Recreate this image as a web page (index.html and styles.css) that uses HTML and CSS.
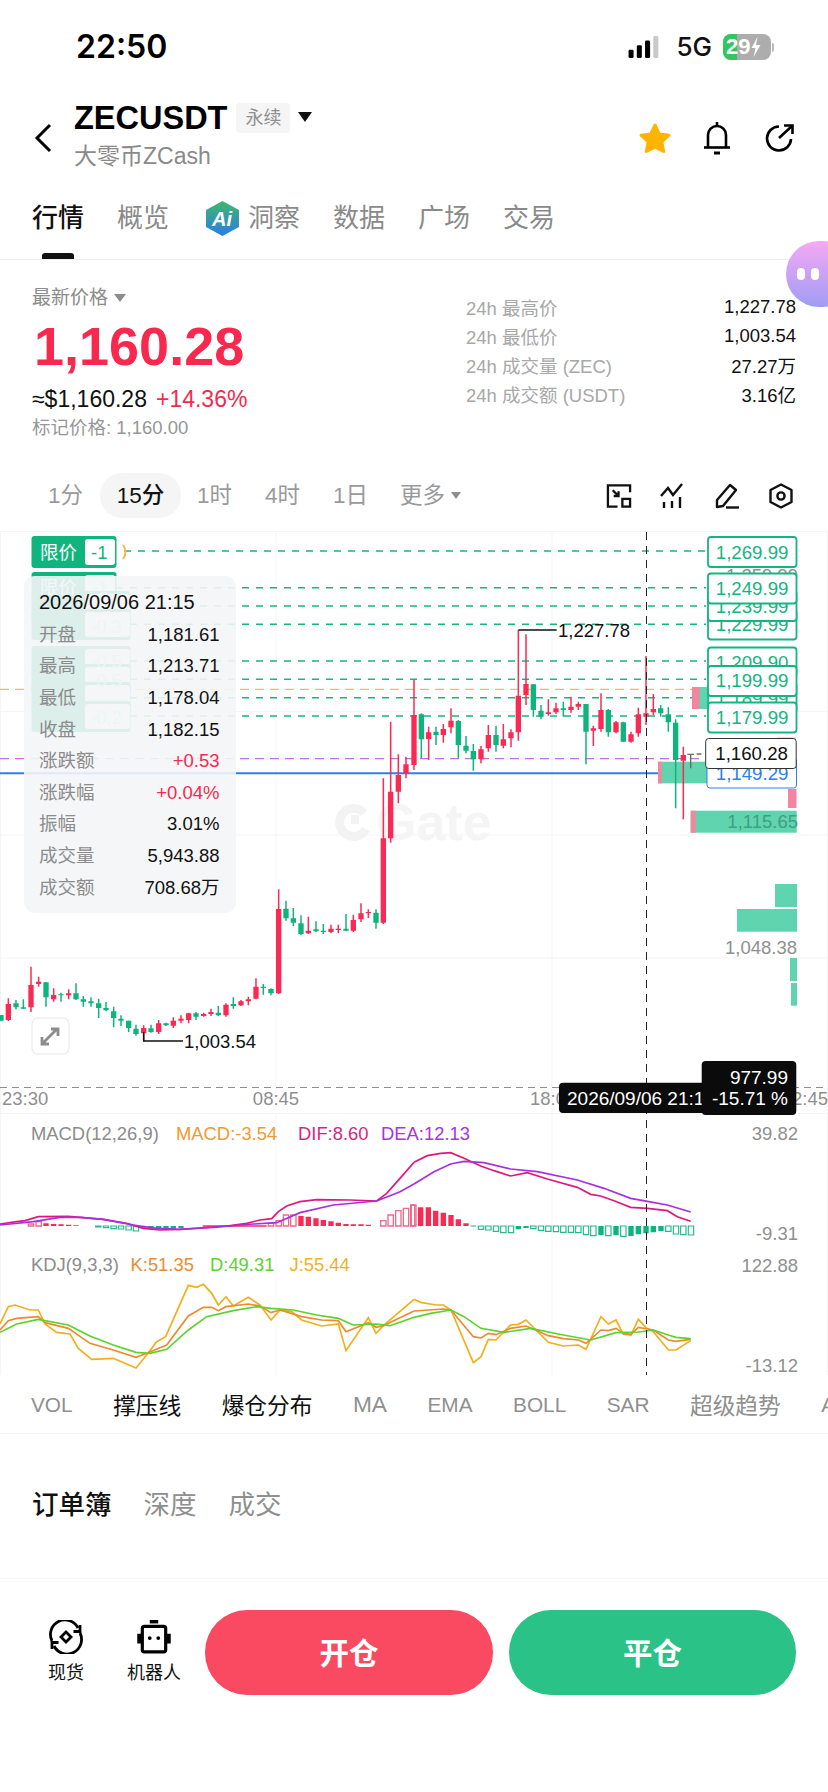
FILE: index.html
```html
<!DOCTYPE html>
<html lang="zh">
<head>
<meta charset="utf-8">
<title>ZECUSDT</title>
<link rel="stylesheet" href="styles.css">
</head>
<body>
<div class="page">
  <header class="status">
    <div class="clock">22:50</div>
    <div class="status-right">
      <svg class="signal" viewBox="0 0 37 24"><rect x="0" y="15" width="5.500" height="9" rx="1.500" fill="#000"/><rect x="9" y="10" width="5.500" height="14" rx="1.500" fill="#000"/><rect x="18" y="5" width="5.500" height="19" rx="1.500" fill="#000"/><rect x="27" y="0" width="5.500" height="24" rx="1.500" fill="#c9c9c9"/></svg>
      <span class="net">5G</span>
      <div class="battery"><span class="battery-fill"></span><span class="battery-num">29</span><svg class="bolt" viewBox="0 0 10 20"><path d="M7 0 1 11h4l-2 9 7-12H5.500z" fill="#fff"/></svg></div>
      <span class="battery-tip"></span>
    </div>
  </header>

  <nav class="nav">
    <svg class="back" viewBox="0 0 18 30"><path d="M16 2 3 15l13 13" fill="none" stroke="#000" stroke-width="3"/></svg>
    <div class="title-block">
      <div class="title-row"><h1 class="symbol">ZECUSDT</h1><span class="chip">永续</span><i class="caret"></i></div>
      <div class="subtitle">大零币ZCash</div>
    </div>
    <div class="nav-actions">
      <svg class="star" viewBox="0 0 34 32"><path d="M17 3l4.200 9 9.800 1.200-7.200 6.700 1.900 9.600L17 25.100 8.300 29.500l1.900-9.600L3 13.200l9.800-1.200z" fill="#ffb400" stroke="#ffb400" stroke-width="3" stroke-linejoin="round"/></svg>
      <svg class="bell" viewBox="0 0 32 34" fill="none" stroke="#000" stroke-width="2.600"><path d="M16 1v3"/><path d="M7 26V14a9 9 0 0 1 18 0v12"/><path d="M3 26.500h26"/><path d="M13 32h6" stroke-width="3"/></svg>
      <svg class="share" viewBox="0 0 30 30" fill="none" stroke="#000" stroke-width="2.600"><path d="M14 3.500A12 12 0 1 0 26 16"/><path d="M14 15 27 3"/><path d="M19 2.500h8.500V11"/></svg>
    </div>
  </nav>

  <div class="tabs">
    <span class="tab tab-on">行情</span>
    <span class="tab">概览</span>
    <span class="tab tab-ai">
      <svg class="ai" viewBox="0 0 33 35"><defs><linearGradient id="aig" x1="0" y1="0" x2="0" y2="1"><stop offset="0" stop-color="#3fb86a"/><stop offset="1" stop-color="#2a7de6"/></linearGradient></defs><path d="M16.500 0 33 9v17l-16.500 9L0 26V9z" fill="url(#aig)"/><text class="ai-text" x="16" y="25">Ai</text></svg>
      洞察
    </span>
    <span class="tab">数据</span>
    <span class="tab">广场</span>
    <span class="tab">交易</span>
    <i class="tab-bar"></i>
    <div class="bubble"><i></i><i></i></div>
  </div>

  <section class="info">
    <div class="info-left">
      <div class="latest">最新价格<i class="tri"></i></div>
      <div class="price">1,160.28</div>
      <div class="sub-price">≈$1,160.28<span class="pct">+14.36%</span></div>
      <div class="mark">标记价格: 1,160.00</div>
    </div>
    <dl class="stats">
      <div class="stat"><dt>24h 最高价</dt><dd>1,227.78</dd></div>
      <div class="stat"><dt>24h 最低价</dt><dd>1,003.54</dd></div>
      <div class="stat"><dt>24h 成交量 (ZEC)</dt><dd>27.27万</dd></div>
      <div class="stat"><dt>24h 成交额 (USDT)</dt><dd>3.16亿</dd></div>
    </dl>
  </section>

  <div class="frames">
    <span class="frame frame-first">1分</span>
    <span class="frame frame-on">15分</span>
    <span class="frame">1时</span>
    <span class="frame">4时</span>
    <span class="frame">1日</span>
    <span class="frame frame-more">更多<i class="tri tri-sm"></i></span>
    <div class="frame-tools">
      <svg viewBox="0 0 27 26" fill="none" stroke="#111" stroke-width="2.400"><path d="M25 9V2H2v22h10"/><path d="M7 7l6 6M13 8v5H8"/><rect x="17" y="16" width="8" height="8"/></svg>
      <svg viewBox="0 0 26 26" fill="none" stroke="#111" stroke-width="2.400"><path d="M1 13 8 5l5 7 9-11"/><path d="M4 19v6M12 18v7M20 14v11"/></svg>
      <svg viewBox="0 0 26 26" fill="none" stroke="#111" stroke-width="2.400" stroke-linejoin="round"><path d="M3 24V17L16 2l6 5L9 23z"/><path d="M12 24.500h13"/></svg>
      <svg viewBox="0 0 24 26" fill="none" stroke="#111" stroke-width="2.400" stroke-linejoin="round"><path d="M12 1.500 22.500 7v12L12 24.500 1.500 19V7z"/><circle cx="12" cy="13" r="3.600"/></svg>
    </div>
  </div>

  <svg class="chart" viewBox="0 531 828 844">
    <!-- grid -->
    <path class="grid" d="M0.500 531V1375M276 531V1110M552 531V1375M827.500 531V1375M0 531.500H828M0 711.500H828M0 835H828M0 958H828M0 1113.500H828M276 1114V1375"/>
    <!-- watermark -->
    <path class="wm-ring" d="M364 813A14 14 0 1 0 366 829"/>
    <rect class="wm-dot" x="351" y="815" width="8" height="9"/>
    <text class="wm" x="376" y="840">Gate</text>
    <!-- order lines -->
    <path class="dash-g" d="M124 551H706M116 587.700H706M116 606H706M116 624.300H706M116 661H706M116 679.300H706M116 697.700H706M116 716H706"/>
    <path class="dash-o" d="M0 689.300H692"/>
    <path class="dash-p" d="M0 758.700H706"/>
    <path class="line-b" d="M0 773.300H706"/>
    <!-- depth bars -->
    <rect class="bar-g" x="692" y="687" width="15" height="22"/><rect class="bar-r" x="692" y="687" width="7.500" height="22"/>
    <rect class="bar-g" x="658" y="761.700" width="50" height="21.700"/><rect class="bar-r" x="658" y="761.700" width="3.700" height="21.700"/>
    <rect class="bar-p" x="777" y="737" width="19" height="6"/>
    <rect class="bar-r" x="788" y="789" width="8.500" height="19"/>
    <rect class="bar-g" x="690.700" y="810.700" width="106" height="22"/><rect class="bar-r" x="690.700" y="810.700" width="5" height="22"/>
    <rect class="bar-g" x="775" y="884" width="22" height="23"/>
    <rect class="bar-g" x="737" y="909" width="60" height="22.700"/>
    <rect class="bar-g" x="790" y="958" width="7" height="23"/>
    <rect class="bar-g" x="791" y="983" width="6" height="22.700"/>
    <text class="t-axis t-end" x="797" y="953.500">1,048.38</text>
    <text class="t-deep t-end" x="798" y="828">1,115.65</text>
    <!-- candles, left third -->
    <g transform="translate(0 860) scale(.33333)">
      <path class="wick-g" d="M3 465V482M48 420V448M70 418V447M138 367V440M183 398V425M228 370V420M250 408V440M273 412V440M296 416V474M318 426V454M341 440V502M363 466V498M386 482V516M408 494V527M453 494V518M498 488V498M588 456V480M655 438V468M700 412V446M790 372V404M813 385V406M858 122V182M880 144V198M903 166V226M948 184V216M970 192V222M1038 162V214M1128 148V206"/>
      <path class="body-g" d="M3 465V482M48 430V442M70 442V446M138 367V412M183 403V406M228 400V418M250 418V425M273 424V430M296 430V444M318 444V451M341 454V474M363 476V482M386 482V504M408 506V522M453 505V516M498 490V496M588 460V470M655 458V466M700 432V438M790 380V384M813 387V400M858 146V175M880 175V188M903 190V222M948 208V214M970 212V216M1038 206V212M1128 158V188"/>
      <path class="wick-r" d="M25 415V483M93 320V456M116 350V380M161 385V425M206 388V418M431 496V544M476 480V522M520 472V504M543 466V490M566 458V490M611 458V470M633 446V468M678 430V470M723 420V438M745 410V436M768 355V418M836 88V402M925 170V222M993 194V220M1015 194V220M1060 164V216M1083 130V186M1105 148V174"/>
      <path class="body-r" d="M25 432V480M93 375V442M116 365V372M161 405V418M206 400V406M431 504V520M476 490V516M520 482V497M543 476V482M566 460V480M611 462V468M633 456V462M678 434V466M723 424V436M745 418V424M768 380V416M836 147V400M925 212V220M993 206V216M1015 206V210M1060 180V212M1083 160V178M1105 156V160"/>
    </g>
    <!-- candles, the rally -->
    <g transform="translate(0 520) scale(.33333)">
      <path class="wick-r" d="M1150 775V1212M1172 605V968M1195 703V850M1218 710V775"/>
      <path class="body-r" d="M1150 955V1208M1172 815V955M1195 765V815M1218 733V760"/>
    </g>
    <!-- candles, right part -->
    <g transform="translate(414 520) scale(.33333)">
      <path class="wick-g" d="M22 580V715M66 620V675M133 600V715M156 648V700M178 672V752M246 617V695M358 493V590M381 555V598M448 545V590M516 552V733M583 567V650M628 605V665M740 555V590M763 562V635M785 598V865"/>
      <path class="body-g" d="M22 583V658M66 635V645M133 603V675M156 677V692M178 693V718M246 645V675M358 493V570M381 572V590M448 565V570M516 552V635M583 570V637M628 607V665M740 565V580M763 583V607M785 608V720"/>
      <path class="wick-r" d="M0 480V750M44 620V720M88 612V668M111 565V640M201 678V730M223 615V695M268 612V685M291 628V682M313 330V662M336 343V555M403 538V587M426 548V582M471 530V578M493 545V570M538 617V678M561 520V635M606 603V640M651 635V668M673 563V650M696 408V615M718 522V585M808 680V898"/>
      <path class="body-r" d="M0 585V735M44 637V657M88 627V645M111 602V622M201 688V718M223 645V685M268 658V677M291 637V655M313 527V637M336 492V525M403 577V582M426 565V577M471 560V570M493 552V560M538 625V632M561 570V627M606 607V637M651 643V665M673 583V640M696 580V590M718 567V577M808 705V722"/>
      <path class="wick-k" d="M830 703V745M820 703H840M848 702H862"/>
      <path class="hook" d="M313 330H428"/>
    </g>
    <path class="hook" d="M143.700 1032V1041H183"/>
    <text class="t-tip" x="558" y="637">1,227.78</text>
    <text class="t-tip" x="184" y="1048">1,003.54</text>
    <!-- expand button -->
    <rect class="expand" x="32" y="1018" width="37" height="36" rx="6"/>
    <path class="expand-arrow" d="M43 1043 57 1029M42 1037v7h7M51 1029h7v7"/>
    <!-- left order tags -->
    <g class="tags">
      <rect class="tag" x="31.500" y="536" width="85" height="32" rx="3"/>
      <rect class="tag" x="31.500" y="572" width="85" height="31" rx="3"/><rect class="tag-in" x="85" y="575" width="30" height="25" rx="3"/>
      <rect class="tag" x="31.500" y="591" width="99" height="31" rx="3"/><rect class="tag-in" x="85" y="594" width="45" height="25" rx="3"/>
      <rect class="tag" x="31.500" y="609" width="99" height="31" rx="3"/><rect class="tag-in" x="85" y="612" width="45" height="25" rx="3"/>
      <rect class="tag" x="31.500" y="646" width="99" height="31" rx="3"/><rect class="tag-in" x="85" y="649" width="45" height="25" rx="3"/>
      <rect class="tag" x="31.500" y="664" width="99" height="31" rx="3"/><rect class="tag-in" x="85" y="667" width="45" height="25" rx="3"/>
      <rect class="tag" x="31.500" y="682" width="99" height="31" rx="3"/><rect class="tag-in" x="85" y="685" width="45" height="25" rx="3"/>
      <rect class="tag" x="31.500" y="701" width="99" height="31" rx="3"/><rect class="tag-in" x="85" y="704" width="45" height="25" rx="3"/>
      <text class="tag-w" x="40" y="593.500">限价</text><text class="tag-n" x="92" y="593.500">-1</text>
      <text class="tag-n" x="90" y="633">-0.3</text>
      <text class="tag-n" x="90" y="668">-0.5</text>
      <text class="tag-n" x="90" y="687">-0.5</text>
      <text class="tag-n" x="90" y="724">-0.2</text>
      <rect class="tag-in" x="85" y="539" width="30" height="26" rx="3"/>
      <text class="tag-w" x="40" y="559">限价</text><text class="tag-g" x="91" y="559">-1</text>
    </g>
    <path class="arc-o" d="M123 545q5 7 0 14"/>
    <!-- data panel -->
    <rect class="panel" x="24" y="576" width="212" height="337" rx="11"/>
    <text class="p-date" x="39" y="609">2026/09/06 21:15</text>
    <text class="p-k" x="39" y="641">开盘</text><text class="p-v" x="219.500" y="641">1,181.61</text>
    <text class="p-k" x="39" y="672">最高</text><text class="p-v" x="219.500" y="672">1,213.71</text>
    <text class="p-k" x="39" y="704">最低</text><text class="p-v" x="219.500" y="704">1,178.04</text>
    <text class="p-k" x="39" y="736">收盘</text><text class="p-v" x="219.500" y="736">1,182.15</text>
    <text class="p-k" x="39" y="767">涨跌额</text><text class="p-v p-up" x="219.500" y="767">+0.53</text>
    <text class="p-k" x="39" y="799">涨跌幅</text><text class="p-v p-up" x="219.500" y="799">+0.04%</text>
    <text class="p-k" x="39" y="830">振幅</text><text class="p-v" x="219.500" y="830">3.01%</text>
    <text class="p-k" x="39" y="862">成交量</text><text class="p-v" x="219.500" y="862">5,943.88</text>
    <text class="p-k" x="39" y="894">成交额</text><text class="p-v" x="219.500" y="894">708.68万</text>
    <!-- right price labels -->
    <rect class="lb" x="708" y="537" width="88.500" height="30" rx="3"/><text class="lb-t" x="788.500" y="558.500">1,269.99</text>
    <text class="t-axis t-end" x="798" y="582">1,259.99</text>
    <rect class="lb" x="708" y="609.500" width="88.500" height="30" rx="3"/><text class="lb-t" x="788.500" y="631">1,229.99</text>
    <rect class="lb" x="708" y="591" width="88.500" height="30" rx="3"/><text class="lb-t" x="788.500" y="613">1,239.99</text>
    <rect class="lb" x="708" y="573.500" width="88.500" height="30" rx="3"/><text class="lb-t" x="788.500" y="595">1,249.99</text>
    <rect class="lb" x="708" y="647.500" width="88.500" height="30" rx="3"/><text class="lb-t" x="788.500" y="668.500">1,209.90</text>
    <rect class="lb" x="708" y="683" width="88.500" height="30" rx="3"/><text class="lb-t" x="788.500" y="705">1,189.99</text>
    <rect class="lb" x="708" y="666" width="88.500" height="30" rx="3"/><text class="lb-t" x="788.500" y="687">1,199.99</text>
    <rect class="lb" x="708" y="702.500" width="88.500" height="30" rx="3"/><text class="lb-t" x="788.500" y="724">1,179.99</text>
    <rect class="lb-b" x="707" y="758" width="89.500" height="30" rx="3"/><text class="lb-bt" x="788.500" y="779.500">1,149.29</text>
    <rect class="lb-k" x="705.700" y="738.500" width="90.500" height="30" rx="3"/><text class="lb-kt" x="788" y="760">1,160.28</text>
    <!-- time axis -->
    <path class="dash-k" d="M0 1087.500H828"/>
    <text class="t-axis" x="2" y="1105">23:30</text>
    <text class="t-axis" x="276" y="1105" text-anchor="middle">08:45</text>
    <text class="t-axis" x="530" y="1105">18:00</text>
    <text class="t-axis t-end" x="828" y="1105">12:45</text>
    <!-- MACD -->
    <text class="t-ind" x="31" y="1139.500">MACD(12,26,9)</text><text class="t-ind c-o" x="176" y="1139.500">MACD:-3.54</text><text class="t-ind c-m" x="298" y="1139.500">DIF:8.60</text><text class="t-ind c-v" x="381" y="1139.500">DEA:12.13</text>
    <text class="t-axis t-end" x="798" y="1140">39.82</text>
    <text class="t-axis t-end" x="798" y="1240">-9.31</text>
    <text class="t-ind" x="31" y="1271">KDJ(9,3,3)</text><text class="t-ind c-k" x="130.500" y="1271">K:51.35</text><text class="t-ind c-d" x="210" y="1271">D:49.31</text><text class="t-ind c-j" x="289.500" y="1271">J:55.44</text>
    <text class="t-axis t-end" x="798" y="1271.500">122.88</text>
    <text class="t-axis t-end" x="798" y="1371.500">-13.12</text>
    <g transform="translate(0 1100) scale(.33333)">
      <path class="h-r-h" d="M85 372h16v6H85zM108 365h16v13h-16zM805 370h16v8h-16zM828 362h16v16h-16zM850 345h16v33h-16zM872 345h16v33h-16zM1142 362h16v16h-16zM1164 345h16v33h-16zM1187 332h16v46h-16zM1210 325h16v53h-16zM1232 315h16v63h-16z"/>
      <path class="h-r-f" d="M138 370V378M161 372V378M183 373V378M206 374V378M228 376V378M903 348V378M925 350V378M948 355V378M970 360V378M993 364V378M1015 368V378M1038 372V378M1060 373V378M1083 373V378M1105 374V378"/>
      <path class="h-r-t" d="M608 378H800"/>
      <path class="h-g-h" d="M287 378h16v3h-16zM310 378h16v5h-16zM333 378h16v8h-16zM355 378h16v9h-16zM378 378h16v12h-16zM400 378h16v15h-16z"/>
      <path class="h-g-f" d="M431 378V384M453 378V386M476 378V388M498 378V387M520 378V386M543 378V384"/>
      <path class="l-m" d="M0 372 50 365 75 362 115 350 205 349 250 353 310 358 380 370 430 385 480 390 540 388 600 384 680 378 740 370 780 360 815 356 835 335 860 318 900 305 950 299 1050 300 1130 303 1160 280 1200 235 1242 187"/>
      <path class="l-v" d="M0 375 100 365 180 352 240 352 310 358 400 375 470 385 540 388 640 382 760 372 830 368 900 338 1000 315 1130 303 1200 275 1242 252"/>
      <path class="l-j" d="M0 672 25 620 45 615 90 630 115 630 135 672 170 697 210 702 235 745 275 778 340 775 408 804 440 765 470 725 497 710 565 556 590 562 610 553 635 580 655 615 678 590 700 618 745 592 780 615 813 660 840 630 875 635 905 660 965 678 1015 672 1038 752 1105 653 1128 700 1150 677 1242 598"/>
      <path class="l-k" d="M0 690 25 662 50 655 115 650 135 668 205 685 270 730 340 750 408 772 440 760 500 735 565 648 610 622 635 622 655 632 678 620 745 612 780 618 813 638 840 630 905 650 965 660 1015 662 1038 695 1105 668 1128 682 1150 677 1242 633"/>
      <path class="l-d" d="M0 697 50 672 115 658 205 675 270 708 340 735 408 757 450 760 500 748 565 690 620 650 700 632 770 620 813 625 880 630 950 645 1015 655 1060 675 1128 672 1170 677 1242 652"/>
    </g>
    <g transform="translate(414 1100) scale(.33333)">
      <path class="h-r-f" d="M20 322V378M43 322V378M65 332V378M88 338V378M111 345V378M133 358V378M156 370V378"/>
      <path class="h-r-h" d="M-8 315h10v63h-10z"/>
      <path class="h-g-h" d="M193 378h16v10h-16zM215 378h16v12h-16zM238 378h16v16h-16zM260 378h16v20h-16zM283 378h16v20h-16zM350 378h16v8h-16zM373 378h16v13h-16zM395 378h16v16h-16zM418 378h16v17h-16zM440 378h16v19h-16zM463 378h16v19h-16zM485 378h16v20h-16zM508 378h16v26h-16zM530 378h16v29h-16zM575 378h16v29h-16zM620 378h16v31h-16zM755 378h16v16h-16zM778 378h16v24h-16zM800 378h16v26h-16zM823 378h16v27h-16z"/>
      <path class="h-g-f" d="M313 378V388M336 378V384M561 378V405M606 378V406M651 378V408M673 378V403M696 378V400M718 378V397M741 378V393"/>
      <path class="h-g-t" d="M170 378H186"/>
      <path class="l-m" d="M0 187 40 167 80 160 110 158 150 175 200 198 240 212 290 228 340 218 400 237 490 262 530 283 560 288 600 302 650 322 700 325 760 332 790 350 830 364"/>
      <path class="l-v" d="M0 252 60 215 110 192 150 184 210 188 290 207 370 215 490 240 570 265 650 295 700 304 760 315 830 336"/>
      <path class="l-j" d="M0 598 20 607 65 615 88 615 111 630 178 788 201 770 223 718 246 720 290 675 313 673 336 660 403 727 448 738 493 735 516 748 561 650 583 672 606 660 628 703 651 705 673 658 696 683 718 695 763 750 786 750 830 722"/>
      <path class="l-k" d="M0 633 88 627 111 630 178 710 201 714 223 700 246 704 290 685 336 678 403 707 448 716 493 720 516 730 561 690 583 692 606 685 628 700 651 703 673 682 718 690 763 720 786 724 830 718"/>
      <path class="l-d" d="M0 652 50 640 111 630 150 650 201 685 270 697 350 685 448 705 530 720 606 698 673 696 718 690 763 705 786 712 830 716"/>
    </g>
    <!-- crosshair and its tooltips -->
    <path class="cross" d="M646.500 532V1375"/>
    <rect class="tip" x="559" y="1082.700" width="170" height="30.300" rx="4"/>
    <text class="tip-t" x="567" y="1104.500">2026/09/06 21:15</text>
    <rect class="tip" x="701.700" y="1061" width="94.600" height="54" rx="4"/>
    <text class="tip-t t-end" x="788" y="1083.500">977.99</text>
    <text class="tip-t t-end" x="788" y="1104.500">-15.71 %</text>
  </svg>

  <div class="inds">
    <span class="ind ind-l">VOL</span>
    <span class="ind ind-on">撑压线</span>
    <span class="ind ind-on">爆仓分布</span>
    <span class="ind">MA</span>
    <span class="ind ind-l">EMA</span>
    <span class="ind ind-l">BOLL</span>
    <span class="ind ind-l">SAR</span>
    <span class="ind">超级趋势</span>
    <span class="ind ind-l">AVL</span>
  </div>

  <div class="book">
    <span class="book-tab book-on">订单簿</span>
    <span class="book-tab">深度</span>
    <span class="book-tab">成交</span>
  </div>

  <footer class="foot">
    <div class="foot-item foot-spot">
      <svg viewBox="0 0 34 34" fill="none" stroke="#000" stroke-width="2.800"><path d="M3 21A14.500 14.500 0 0 1 29 8"/><path d="M31 13A14.500 14.500 0 0 1 5 26"/><path d="M31 5v6.500h-6.500"/><path d="M3 29v-6.500h6.500"/><path d="M17 12l5 5-5 5-5-5z"/></svg>
      <span>现货</span>
    </div>
    <div class="foot-item foot-bot">
      <svg viewBox="0 0 32 32" fill="none" stroke="#000" stroke-width="3"><path d="M12 1.500h8" stroke-width="3.500"/><rect x="5" y="6" width="22" height="24" rx="2"/><path d="M2 13v9M30 13v9" stroke-width="3.500"/><circle cx="12" cy="17" r="1.800" fill="#000" stroke="none"/><circle cx="20" cy="17" r="1.800" fill="#000" stroke="none"/></svg>
      <span>机器人</span>
    </div>
    <div class="foot-btns">
      <button class="btn btn-open">开仓</button>
      <button class="btn btn-close">平仓</button>
    </div>
  </footer>
</div>
</body>
</html>
```
FILE: styles.css
```css
* { box-sizing: border-box; }
html, body { margin: 0; padding: 0; background: #fff; }
body { font-family: "Liberation Sans", "Noto Sans CJK SC", sans-serif; color: #111; }
.page { width: 828px; height: 1792px; overflow: hidden; display: flex; flex-direction: column; }
i { display: block; font-style: normal; }

/* status bar */
.status { height: 96px; flex: none; display: flex; justify-content: space-between; align-items: flex-start; padding: 29px 54px 0 76px; }
.clock { font: 600 32px/36px Inter, sans-serif; color: #000; }
.status-right { display: flex; align-items: center; gap: 0; margin-top: 3px; height: 30px; }
.signal { width: 37px; height: 22px; margin-right: 12px; }
.net { font: 500 26px/30px Inter, sans-serif; margin-right: 11px; color: #111; }
.battery { position: relative; width: 48px; height: 26px; border-radius: 8px; background: #adadad; overflow: hidden; display: flex; align-items: center; padding-left: 3px; }
.battery-fill { position: absolute; left: 0; top: 0; bottom: 0; width: 14px; background: #34c55c; }
.battery-num { position: relative; font: 700 22px/26px "Liberation Sans", sans-serif; color: #fff; }
.bolt { position: relative; width: 11px; height: 20px; }
.battery-tip { width: 2px; height: 9px; background: #bbb; border-radius: 0 2px 2px 0; margin-left: 1px; }

/* nav */
.nav { height: 74px; flex: none; display: flex; align-items: flex-start; position: relative; padding-left: 34px; }
.back { width: 18px; height: 30px; margin-top: 27px; flex: none; }
.title-block { margin-left: 22px; padding-top: 7px; }
.title-row { display: flex; align-items: center; height: 30px; }
.symbol { margin: 0; font-size: 32.500px; line-height: 30px; font-weight: 700; color: #000; }
.chip { margin-left: 9px; width: 54px; height: 30px; border-radius: 4px; background: #f5f5f5; color: #8f8f8f; font-size: 18px; line-height: 30px; text-align: center; }
.caret { margin-left: 8px; margin-top: -2px; width: 0; height: 0; border-left: 7px solid transparent; border-right: 7px solid transparent; border-top: 10px solid #111; }
.subtitle { margin-top: 10px; font-size: 23px; line-height: 26px; color: #8a8a8a; }
.nav-actions { margin-left: auto; margin-top: 25px; padding-right: 33px; display: flex; align-items: center; }
.star { width: 34px; height: 32px; margin-right: 29px; }
.bell { width: 32px; height: 34px; margin-right: 32px; }
.share { width: 30px; height: 30px; }

/* tabs */
.tabs { height: 90px; flex: none; display: flex; gap: 33px; padding: 30px 0 0 32px; border-bottom: 1px solid #eee; position: relative; }
.tab { font-size: 26px; line-height: 36px; height: 36px; color: #8a8a8a; display: flex; align-items: center; gap: 9px; }
.tab-on { color: #111; font-weight: 500; }
.tab-ai { margin-left: 4px; }
.ai { width: 33px; height: 35px; }
.ai-text { font: italic 700 20px "Liberation Sans", sans-serif; fill: #fff; text-anchor: middle; }
.tab-bar { position: absolute; left: 42px; bottom: 0; width: 32px; height: 6px; border-radius: 3px 3px 0 0; background: #111; }
.bubble { position: absolute; left: 786px; top: 71px; width: 70px; height: 66px; border-radius: 33px; background: linear-gradient(180deg, #f6a9f3, #9f9cf6); display: flex; gap: 6px; padding: 27px 0 0 11px; z-index: 2; }
.bubble i { width: 8px; height: 12px; border-radius: 4px; background: #fff; }

/* summary */
.info { height: 200px; flex: none; display: flex; justify-content: space-between; padding: 26px 32px 0; }
.latest { font-size: 19px; line-height: 24px; color: #8c8c8c; display: flex; align-items: center; gap: 6px; }
.tri { width: 0; height: 0; border-left: 6px solid transparent; border-right: 6px solid transparent; border-top: 8px solid #8c8c8c; }
.tri-sm { border-left-width: 5px; border-right-width: 5px; border-top-width: 7px; }
.price { margin: 8px 0 0 2px; font-size: 54px; line-height: 56px; font-weight: 700; color: #f8294f; }
.sub-price { margin-top: 12px; font-size: 23px; line-height: 26px; color: #111; }
.pct { margin-left: 9px; color: #f8294f; }
.mark { margin-top: 3px; font-size: 18.500px; line-height: 26px; color: #979797; }
.stats { margin: 6px 0 0; width: 330px; display: flex; flex-direction: column; }
.stat { height: 29px; display: flex; align-items: center; justify-content: space-between; }
.stat dt { font-size: 18.500px; color: #a8a8a8; }
.stat dd { margin: 0; font-size: 18.500px; color: #111; }

/* timeframes */
.frames { height: 71px; flex: none; display: flex; align-items: center; padding: 0 34px 0 48px; font-size: 22.500px; color: #9a9a9a; }
.frame { height: 45px; line-height: 45px; margin-right: 33px; border-radius: 22px; }
.frame-first { margin-right: 17px; }
.frame-on { width: 81px; margin-right: 16px; text-align: center; background: #f5f5f5; color: #111; font-weight: 500; }
.frame-more { display: flex; align-items: center; gap: 6px; margin-left: -1px; }
.frame-tools { margin-left: auto; display: flex; align-items: center; gap: 28px; }
.frame-tools svg { width: 26px; height: 26px; }

/* chart */
.chart { display: block; width: 828px; height: 844px; flex: none; font-family: "Liberation Sans", "Noto Sans CJK SC", sans-serif; }
.grid { stroke: #f5f5f5; stroke-width: 1; fill: none; }
.wm { font-size: 52px; font-weight: 700; fill: #f5f5f5; }
.wm-ring { fill: none; stroke: #f3f3f3; stroke-width: 9; }
.wm-dot { fill: #f3f3f3; }
.dash-g { stroke: #16b681; stroke-width: 1.500; stroke-dasharray: 7 7; fill: none; }
.dash-o { stroke: #f8b94e; stroke-width: 1.200; stroke-dasharray: 9 6; fill: none; }
.dash-p { stroke: #c46de0; stroke-width: 1.300; stroke-dasharray: 9 6; fill: none; }
.dash-k { stroke: #8d8d8d; stroke-width: 1; stroke-dasharray: 7 5; fill: none; }
.line-b { stroke: #2a80f0; stroke-width: 2; fill: none; }
.bar-g { fill: #5fd4ae; }
.bar-r { fill: #f5859f; }
.bar-p { fill: #fcd5de; }
.wick-g, .wick-r, .wick-k, .body-g, .body-r, .hook { fill: none; }
.wick-g { stroke: #0db57c; stroke-width: 4.500; }
.wick-r { stroke: #fb2a55; stroke-width: 4.500; }
.wick-k { stroke: #77615f; stroke-width: 4; }
.body-g { stroke: #0db57c; stroke-width: 16; }
.body-r { stroke: #fb2a55; stroke-width: 16; }
.hook { stroke: #111; stroke-width: 1.500; }
g .hook { stroke-width: 4.500; }
.t-axis { font-size: 18.500px; fill: #8f8f8f; }
.t-deep { font-size: 18.500px; fill: #3f9f82; }
.t-end { text-anchor: end; }
.t-tip { font-size: 18.500px; fill: #111; }
.expand { fill: #fff; stroke: #eee; stroke-width: 1.500; }
.expand-arrow { fill: none; stroke: #8c8c8c; stroke-width: 2.800; }
.tag { fill: #10b57e; }
.tag-in { fill: #fff; }
.tag-w { font-size: 18.500px; fill: #fff; }
.tag-g { font-size: 18.500px; fill: #10b57e; }
.tag-n { font-size: 18.500px; fill: #9fb; }
.arc-o { fill: none; stroke: #f8b94e; stroke-width: 2; }
.panel { fill: #f3f5f7; fill-opacity: .9; }
.p-date { font-size: 20px; fill: #111; }
.p-k { font-size: 18.500px; fill: #8c8c8c; }
.p-v { font-size: 18.500px; fill: #111; text-anchor: end; }
.p-up { fill: #f8294f; }
.lb { fill: #fff; stroke: #14b57f; stroke-width: 1.800; }
.lb-t { font-size: 18.700px; fill: #14b57f; text-anchor: end; }
.lb-b { fill: #fff; stroke: #2a80f0; stroke-width: 1; }
.lb-bt { font-size: 18.700px; fill: #2a80f0; text-anchor: end; }
.lb-k { fill: #fff; stroke: #333; stroke-width: 1; }
.lb-kt { font-size: 18.700px; fill: #111; text-anchor: end; }
.t-ind { font-size: 18.400px; fill: #8c8c8c; }
.c-o { fill: #f29a2e; }
.c-m { fill: #dd1e82; }
.c-v { fill: #a833e0; }
.c-k { fill: #ee8a2e; }
.c-d { fill: #5dd32e; }
.c-j { fill: #f4b01e; }
.h-r-h, .h-g-h, .l-m, .l-v, .l-j, .l-k, .l-d { fill: none; }
.h-r-h { stroke: #f0688a; stroke-width: 4; }
.h-r-f { stroke: #fb2a55; stroke-width: 16; fill: none; }
.h-r-t { stroke: #fb2a55; stroke-width: 5; fill: none; }
.h-g-h { stroke: #25b98b; stroke-width: 3.500; }
.h-g-f { stroke: #0db57c; stroke-width: 16; fill: none; }
.h-g-t { stroke: #0db57c; stroke-width: 3; fill: none; }
.l-m { stroke: #e0187e; stroke-width: 5; }
.l-v { stroke: #a82fe0; stroke-width: 5; }
.l-j { stroke: #f3ae1a; stroke-width: 5; }
.l-k { stroke: #ee8a2e; stroke-width: 5; }
.l-d { stroke: #5bd32a; stroke-width: 5; }
.cross { stroke: #222; stroke-width: 1; stroke-dasharray: 8 6; fill: none; }
.tip { fill: #0b0b0b; }
.tip-t { font-size: 19px; fill: #fff; }

/* indicator row */
.inds { height: 59px; flex: none; display: flex; align-items: center; white-space: nowrap; overflow: hidden; padding-left: 31px; border-bottom: 1px solid #f5f5f5; font-size: 22.700px; color: #8f8f8f; gap: 40.500px; }
.ind { flex: none; }
.ind-l { font-size: 20.800px; padding-top: 2px; }
.ind-on { color: #111; }

/* order book tabs */
.book { height: 145px; flex: none; display: flex; align-items: flex-start; gap: 32px; padding: 53px 0 0 32px; border-bottom: 1px solid #f5f5f5; font-size: 26.500px; line-height: 36px; color: #8f8f8f; }
.book-on { color: #111; font-weight: 500; }

/* footer */
.foot { flex: 1; display: flex; align-items: flex-start; padding: 31px 32px 0 0; position: relative; }
.foot-item { display: flex; flex-direction: column; align-items: center; font-size: 18px; line-height: 24px; color: #111; flex: none; }
.foot-item svg { width: 34px; height: 34px; margin-bottom: 7px; margin-top: 10px; }
.foot-spot { width: 60px; margin-left: 36px; }
.foot-bot { width: 70px; margin-left: 23px; }
.foot-btns { margin-left: 16px; display: flex; gap: 16px; }
.btn { border: 0; padding: 0 0 4px; height: 85px; width: 288px; border-radius: 42px; font: 700 29.500px "Liberation Sans", "Noto Sans CJK SC", sans-serif; color: #fff; }
.btn-open { background: #fa4a62; }
.btn-close { background: #2bc287; width: 287px; }
```
